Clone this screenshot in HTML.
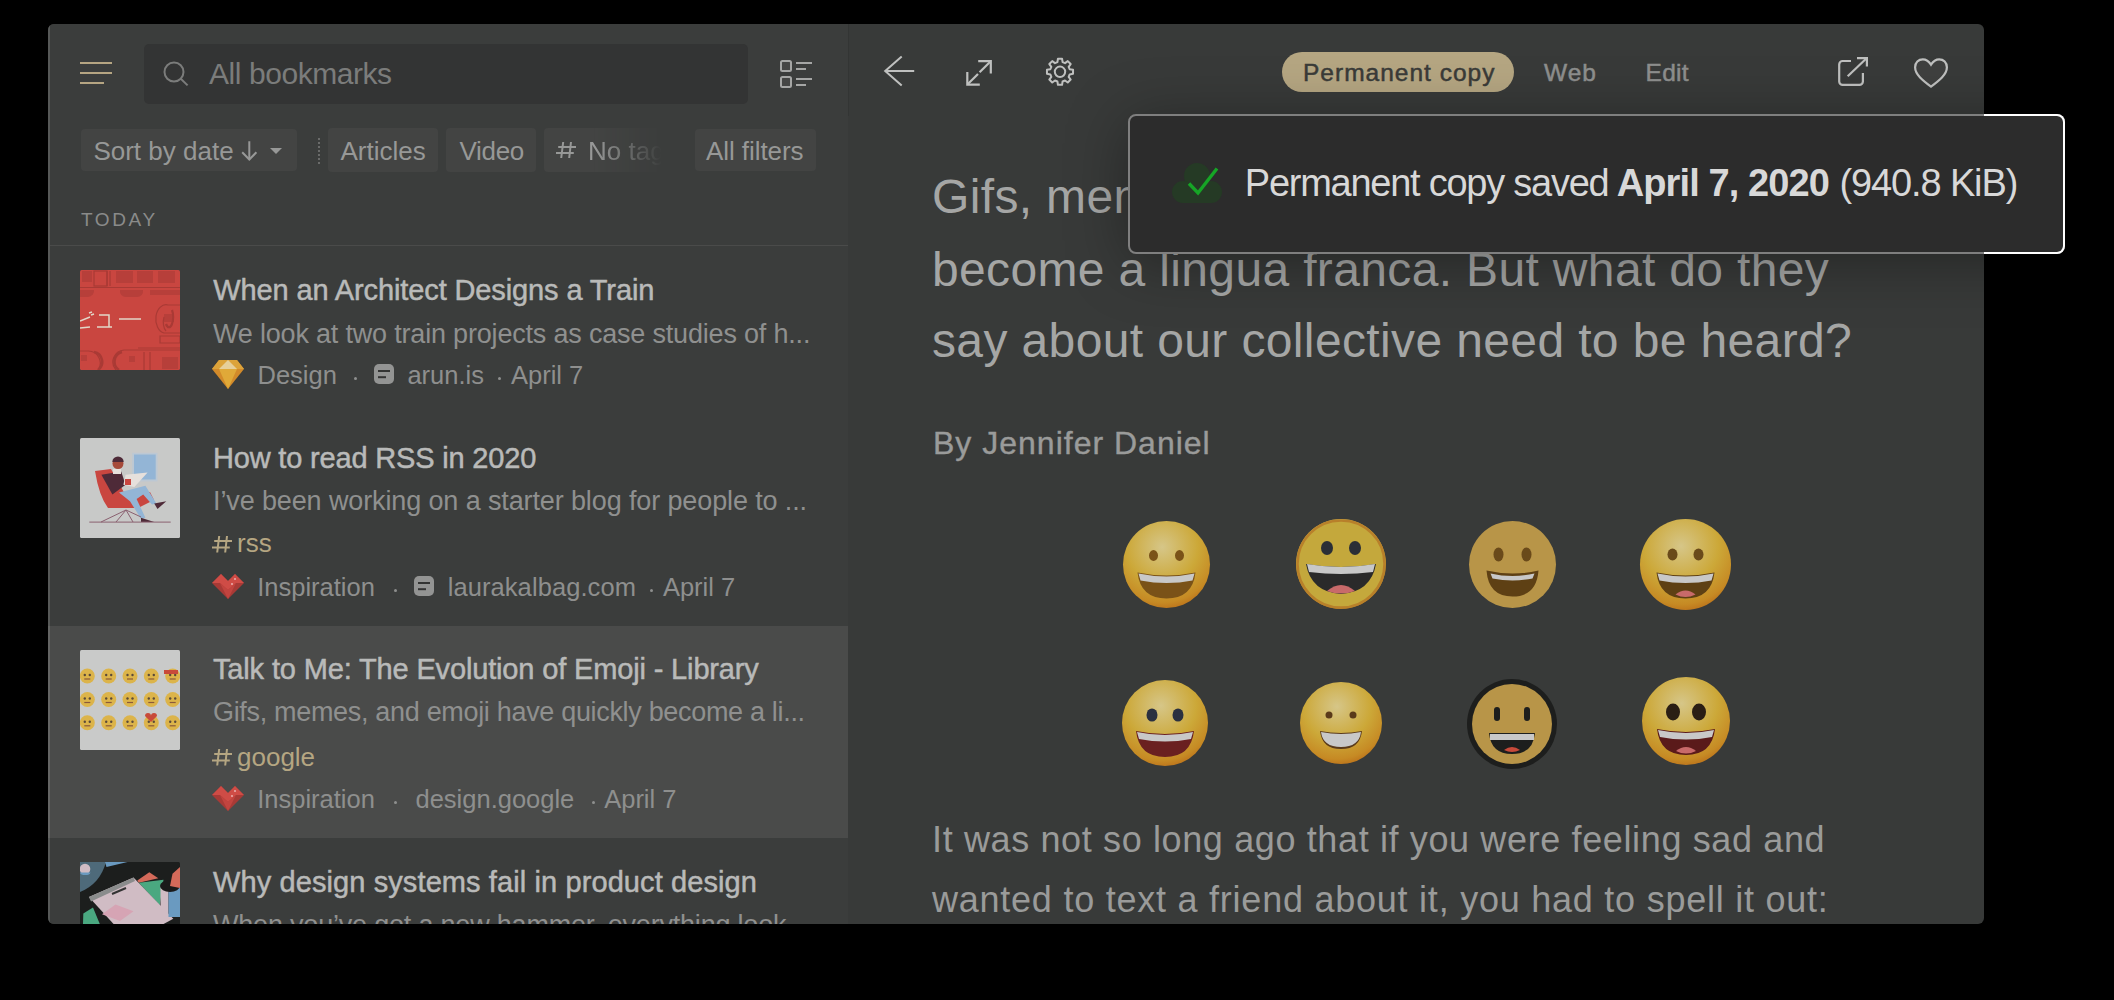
<!DOCTYPE html>
<html><head><meta charset="utf-8">
<style>
html,body{margin:0;padding:0;background:#000;width:2114px;height:1000px;overflow:hidden;font-family:"Liberation Sans",sans-serif;}
.t{position:absolute;white-space:nowrap;line-height:1;}
.abs{position:absolute;}
.clip{position:absolute;left:48px;top:24px;width:1936px;height:900px;overflow:hidden;border-radius:6px;}
.inner{position:absolute;left:-48px;top:-24px;width:2114px;height:1000px;}
</style></head>
<body>
<div class="clip"><div class="inner">
<div class="abs" style="left:48px;top:24px;width:1936px;height:900px;background:#383a39;"></div>
<div class="abs" style="left:48px;top:24px;width:800px;height:900px;background:#3b3d3c;"></div>
<div class="abs" style="left:48px;top:626px;width:800px;height:212px;background:#4a4b4a;"></div>
<div class="abs" style="left:48px;top:24px;width:2px;height:900px;background:rgba(255,255,255,0.14);"></div>
<div class="abs" style="left:848px;top:24px;width:1px;height:92px;background:#333534;"></div>
<div class="abs" style="left:50px;top:245px;width:798px;height:1px;background:#4a4b4a;"></div>
<div class="abs" style="left:80px;top:62px;width:32px;height:2px;background:#b5a582;"></div>
<div class="abs" style="left:80px;top:72px;width:32px;height:2px;background:#b5a582;"></div>
<div class="abs" style="left:80px;top:82px;width:24px;height:2px;background:#b5a582;"></div>
<div class="abs" style="left:144px;top:44px;width:604px;height:60px;background:#333434;border-radius:5px;"></div>
<svg class="abs" style="left:160px;top:58px" width="32" height="32" viewBox="0 0 32 32"><circle cx="14" cy="14" r="9.5" fill="none" stroke="#7b7c7b" stroke-width="2"/><line x1="20.8" y1="20.8" x2="27.6" y2="27.4" stroke="#7b7c7b" stroke-width="2"/></svg>
<div class="t" style="left:209.0px;top:58.9px;font-size:30px;color:#7b7c7b;letter-spacing:-0.44px;">All bookmarks</div>
<svg class="abs" style="left:776px;top:56px" width="40" height="36" viewBox="0 0 40 36"><rect x="5" y="5" width="10" height="10" rx="1.5" fill="#454645" stroke="#a5a6a5" stroke-width="2"/><rect x="5" y="21" width="10" height="10" rx="1.5" fill="#454645" stroke="#a5a6a5" stroke-width="2"/><rect x="20" y="6" width="16" height="2" fill="#a5a6a5"/><rect x="20" y="12" width="10" height="2" fill="#a5a6a5"/><rect x="20" y="22" width="16" height="2" fill="#a5a6a5"/><rect x="20" y="28" width="10" height="2" fill="#a5a6a5"/></svg>
<div class="abs" style="left:81px;top:129px;width:216px;height:42px;background:#434443;border-radius:4px;"></div>
<div class="t" style="left:93.4px;top:137.9px;font-size:26px;color:#979897;">Sort by date</div>
<svg class="abs" style="left:240px;top:140px" width="20" height="22" viewBox="0 0 20 22" fill="none" stroke="#979897" stroke-width="2"><path d="M9.3 1.2 V19.5"/><path d="M2.2 12.3 L9.3 19.5 L16.4 12.3"/></svg>
<svg class="abs" style="left:268px;top:146px" width="16" height="10" viewBox="0 0 16 10"><path d="M2 2 L14 2 L8 8 Z" fill="#979897"/></svg>
<div class="abs" style="left:318px;top:138px;width:2px;height:26px;background:repeating-linear-gradient(#6a6b6a 0 2px,transparent 2px 4px);"></div>
<div class="abs" style="left:328px;top:128px;width:110px;height:44px;background:#434443;border-radius:4px;"></div>
<div class="t" style="left:340.5px;top:137.9px;font-size:26px;color:#979897;">Articles</div>
<div class="abs" style="left:446px;top:128px;width:90px;height:44px;background:#434443;border-radius:4px;"></div>
<div class="t" style="left:459.4px;top:137.9px;font-size:26px;color:#979897;letter-spacing:-0.29px;">Video</div>
<div class="abs" style="left:544px;top:128px;width:140px;height:44px;overflow:hidden;-webkit-mask-image:linear-gradient(90deg,#000 0,#000 50px,rgba(0,0,0,0.55) 82px,transparent 118px);"><div class="abs" style="left:0;top:0;width:140px;height:44px;background:#434443;border-radius:4px;"></div><div class="t" style="left:44px;top:9.8px;font-size:26px;color:#979897;">No tag</div></div>
<svg class="abs" style="left:556px;top:142px" width="20" height="16" viewBox="0 0 20 16" fill="none" stroke="#979897" stroke-width="2"><path d="M2.20 4.96 H20.00 M0 11.04 H17.80 M7.20 0 L5.20 16.00 M15.00 0 L13.20 16.00"/></svg>
<div class="abs" style="left:695px;top:129px;width:121px;height:42px;background:#434443;border-radius:4px;"></div>
<div class="t" style="left:706.0px;top:137.9px;font-size:26px;color:#979897;letter-spacing:-0.07px;">All filters</div>
<div class="t" style="left:81.0px;top:209.9px;font-size:19px;color:#8a8b8a;letter-spacing:2.6px;">TODAY</div>
<svg class="abs" style="left:80px;top:270px" width="100" height="100" viewBox="0 0 100 100"><rect width="100" height="100" rx="1.5" fill="#c94640"/><g fill="#b73f3a"><rect x="2" y="1" width="10" height="11"/><rect x="36" y="1" width="17" height="12"/><rect x="57" y="1" width="16" height="12"/><rect x="78" y="1" width="17" height="12"/><path d="M0 20 h14 a7 6 0 0 1 -6 7 h-8z"/><path d="M40 20 h23 a6 6 0 0 1 -6 7 h-11 a6 6 0 0 1 -6 -7z"/><rect x="70" y="20" width="30" height="5"/><rect x="84" y="44" width="10" height="8"/><rect x="1" y="85" width="6" height="6"/><rect x="49" y="86" width="6" height="6"/><rect x="82" y="87" width="16" height="12"/></g><g fill="none" stroke="#a93a35" stroke-width="1.2"><rect x="14" y="1" width="13" height="15"/><path d="M27 1 v15 M30 1 v15"/><path d="M0 17.5 H100"/><path d="M100 35 H88 a10 14 0 0 0 -4 28 H100"/><path d="M84 47 a5 10 0 0 0 2 14"/><path d="M80 66 h20 v7 h-20z"/><path d="M0 81 H8 a12 12 0 0 1 10 19"/><path d="M14 82 a10 10 0 0 1 4 18" stroke-width="2.5"/><path d="M100 80 H44 a12 12 0 0 0 -8 20"/><path d="M42 82 a10 10 0 0 0 -3 18" stroke-width="2.5"/><path d="M64 82 v18 M70 82 v18"/><path d="M58 78 h42"/><path d="M92 40 a4 10 0 0 1 -6 14" stroke-width="2.2"/></g><g stroke="#e2d7c8" stroke-width="1.5" fill="none"><path d="M0 51 L10 47 M9 43 L12 42 M11 45 L14 44 M0 58 L10 57"/><path d="M19 45 h10 v12 M17 57 h15"/><path d="M39 49 h22"/></g></svg>
<div class="t" style="left:213.3px;top:275.6px;font-size:29px;color:#b9bab9;letter-spacing:-0.12px;-webkit-text-stroke:0.5px #b9bab9;">When an Architect Designs a Train</div>
<div class="t" style="left:213.0px;top:320.5px;font-size:27px;color:#8f908f;letter-spacing:-0.19px;">We look at two train projects as case studies of h...</div>
<svg class="abs" style="left:212px;top:359px" width="32" height="30" viewBox="0 0 32 30"><path d="M7 1 L25 1 L32 10 L16 30 L0 10 Z" fill="#d28a2a"/><path d="M7 1 L25 1 L32 10 L0 10 Z" fill="#dca33a"/><path d="M16 1 L25 10 L7 10 Z" fill="#e6cf9a"/><path d="M7 10 L25 10 L16 30 Z" fill="#e0a938"/></svg>
<div class="t" style="left:257.5px;top:363.2px;font-size:25.5px;color:#8e8f8e;">Design</div>
<div class="abs" style="left:354.0px;top:376.8px;width:3px;height:3px;background:#8e8f8e;border-radius:50%;"></div>
<svg class="abs" style="left:374px;top:364px" width="20" height="20" viewBox="0 0 20 20"><rect x="0" y="0" width="20" height="20" rx="5" fill="#939493"/><rect x="4" y="6" width="12" height="2" fill="#333433"/><rect x="4" y="12.2" width="8" height="2" fill="#333433"/></svg>
<div class="t" style="left:407.4px;top:363.2px;font-size:25.5px;color:#8e8f8e;">arun.is</div>
<div class="abs" style="left:498.2px;top:376.8px;width:3px;height:3px;background:#8e8f8e;border-radius:50%;"></div>
<div class="t" style="left:511.0px;top:363.2px;font-size:25.5px;color:#8e8f8e;">April 7</div>
<svg class="abs" style="left:80px;top:438px" width="100" height="100" viewBox="0 0 100 100"><rect width="100" height="100" rx="1.5" fill="#c8c9c8"/><rect x="52.2" y="14.8" width="25.3" height="28.6" fill="#bcc8d4"/><rect x="54" y="16.5" width="21.7" height="25" fill="#93b5d6"/><path d="M15 33 L31 31 L46 58 L70 54 L74 62 L58 70 L28 70 Q19 58 15 33 Z" fill="#c94640"/><path d="M21.4 36.8 L41.2 33.5 L45.6 46.7 L32.4 56.6 Z" fill="#4e2a38"/><path d="M39 54.4 L65.4 47.8 L76.4 65.4 L72 66.5 L63.2 56.6 L56.6 61 L65.4 79.7 L61 80.8 L50 63.2 Z" fill="#93b5d6"/><circle cx="38" cy="25.5" r="5.5" fill="#a64a3a"/><path d="M32.3 24 a5.7 5.5 0 0 1 11.4 0 z" fill="#4e2a38"/><path d="M33 31 h8 v5 h-8z" fill="#e6e0dc"/><path d="M45.6 36.8 L67.6 34.6 L54.4 48.9 L43.4 46.7 Z" fill="#e6e0dc"/><rect x="45" y="41" width="6" height="6" fill="#c94640"/><path d="M74.2 65.4 L86.3 63.2 L77.5 70.9 Z" fill="#4e2a38"/><path d="M61 79.7 L74.2 84 L61 84 Z" fill="#4e2a38"/><g stroke="#8a6070" stroke-width="1"><line x1="9.3" y1="84.1" x2="90.7" y2="84.1"/><line x1="46" y1="72" x2="21" y2="84"/><line x1="46" y1="72" x2="36" y2="84"/><line x1="46" y1="72" x2="53" y2="84"/><line x1="46" y1="72" x2="61" y2="79"/></g></svg>
<div class="t" style="left:213.0px;top:443.7px;font-size:29px;color:#b9bab9;letter-spacing:-0.18px;-webkit-text-stroke:0.5px #b9bab9;">How to read RSS in 2020</div>
<div class="t" style="left:213.0px;top:488.0px;font-size:27px;color:#8f908f;letter-spacing:-0.12px;">I’ve been working on a starter blog for people to ...</div>
<svg class="abs" style="left:212px;top:536px" width="20" height="16.5" viewBox="0 0 20 16.5" fill="none" stroke="#b5a682" stroke-width="2"><path d="M2.20 5.12 H20.00 M0 11.38 H17.80 M7.20 0 L5.20 16.50 M15.00 0 L13.20 16.50"/></svg>
<div class="t" style="left:237.0px;top:530.4px;font-size:26px;color:#b5a682;">rss</div>
<svg class="abs" style="left:212px;top:573px" width="32" height="26" viewBox="0 0 32 26"><path d="M0 10 L9 1 L16 8 L23 1 L32 10 L16 26 Z" fill="#a83a36"/><path d="M0 10 L9 1 L16 8 L23 1 L32 10 L24 10 L16 17 L8 10 Z" fill="#cf4c46"/><path d="M8 10 L16 17 L24 10 L16 26 Z" fill="#c2443f"/><circle cx="23" cy="6" r="1" fill="#e8b0b0"/><circle cx="20" cy="11" r="1" fill="#e8b0b0"/></svg>
<div class="t" style="left:257.2px;top:574.9px;font-size:25.5px;color:#8e8f8e;">Inspiration</div>
<div class="abs" style="left:393.9px;top:588.5px;width:3px;height:3px;background:#8e8f8e;border-radius:50%;"></div>
<svg class="abs" style="left:414px;top:576px" width="20" height="20" viewBox="0 0 20 20"><rect x="0" y="0" width="20" height="20" rx="5" fill="#939493"/><rect x="4" y="6" width="12" height="2" fill="#333433"/><rect x="4" y="12.2" width="8" height="2" fill="#333433"/></svg>
<div class="t" style="left:447.7px;top:574.9px;font-size:25.5px;color:#8e8f8e;letter-spacing:0.08px;">laurakalbag.com</div>
<div class="abs" style="left:650.3px;top:588.5px;width:3px;height:3px;background:#8e8f8e;border-radius:50%;"></div>
<div class="t" style="left:662.9px;top:574.9px;font-size:25.5px;color:#8e8f8e;">April 7</div>
<svg class="abs" style="left:80px;top:650px" width="100" height="100" viewBox="0 0 100 100"><rect width="100" height="100" rx="1.5" fill="#c9cac9"/><circle cx="7.3" cy="26" r="7.5" fill="#dcb44a"/><circle cx="4.8" cy="25" r="1.2" fill="#5a4a3a"/><circle cx="9.8" cy="25" r="1.2" fill="#5a4a3a"/><path d="M4.3 29 h6" stroke="#8a5a3a" stroke-width="1.2"/><circle cx="28.7" cy="26" r="7.5" fill="#dcb44a"/><circle cx="26.2" cy="25" r="1.2" fill="#5a4a3a"/><circle cx="31.2" cy="25" r="1.2" fill="#5a4a3a"/><path d="M25.7 29 h6" stroke="#8a5a3a" stroke-width="1.2"/><circle cx="50" cy="26" r="7.5" fill="#dcb44a"/><circle cx="47.5" cy="25" r="1.2" fill="#5a4a3a"/><circle cx="52.5" cy="25" r="1.2" fill="#5a4a3a"/><path d="M47 29 h6" stroke="#8a5a3a" stroke-width="1.2"/><circle cx="71.3" cy="26" r="7.5" fill="#dcb44a"/><circle cx="68.8" cy="25" r="1.2" fill="#5a4a3a"/><circle cx="73.8" cy="25" r="1.2" fill="#5a4a3a"/><path d="M68.3 29 h6" stroke="#8a5a3a" stroke-width="1.2"/><circle cx="92.7" cy="26" r="7.5" fill="#dcb44a"/><circle cx="90.2" cy="25" r="1.2" fill="#5a4a3a"/><circle cx="95.2" cy="25" r="1.2" fill="#5a4a3a"/><path d="M89.7 29 h6" stroke="#8a5a3a" stroke-width="1.2"/><circle cx="7.3" cy="49.5" r="7.5" fill="#dcb44a"/><circle cx="4.8" cy="48.5" r="1.2" fill="#5a4a3a"/><circle cx="9.8" cy="48.5" r="1.2" fill="#5a4a3a"/><path d="M4.3 52.5 h6" stroke="#8a5a3a" stroke-width="1.2"/><circle cx="28.7" cy="49.5" r="7.5" fill="#dcb44a"/><circle cx="26.2" cy="48.5" r="1.2" fill="#5a4a3a"/><circle cx="31.2" cy="48.5" r="1.2" fill="#5a4a3a"/><path d="M25.7 52.5 h6" stroke="#8a5a3a" stroke-width="1.2"/><circle cx="50" cy="49.5" r="7.5" fill="#dcb44a"/><circle cx="47.5" cy="48.5" r="1.2" fill="#5a4a3a"/><circle cx="52.5" cy="48.5" r="1.2" fill="#5a4a3a"/><path d="M47 52.5 h6" stroke="#8a5a3a" stroke-width="1.2"/><circle cx="71.3" cy="49.5" r="7.5" fill="#dcb44a"/><circle cx="68.8" cy="48.5" r="1.2" fill="#5a4a3a"/><circle cx="73.8" cy="48.5" r="1.2" fill="#5a4a3a"/><path d="M68.3 52.5 h6" stroke="#8a5a3a" stroke-width="1.2"/><circle cx="92.7" cy="49.5" r="7.5" fill="#dcb44a"/><circle cx="90.2" cy="48.5" r="1.2" fill="#5a4a3a"/><circle cx="95.2" cy="48.5" r="1.2" fill="#5a4a3a"/><path d="M89.7 52.5 h6" stroke="#8a5a3a" stroke-width="1.2"/><circle cx="7.3" cy="72.8" r="7.5" fill="#dcb44a"/><circle cx="4.8" cy="71.8" r="1.2" fill="#5a4a3a"/><circle cx="9.8" cy="71.8" r="1.2" fill="#5a4a3a"/><path d="M4.3 75.8 h6" stroke="#8a5a3a" stroke-width="1.2"/><circle cx="28.7" cy="72.8" r="7.5" fill="#dcb44a"/><circle cx="26.2" cy="71.8" r="1.2" fill="#5a4a3a"/><circle cx="31.2" cy="71.8" r="1.2" fill="#5a4a3a"/><path d="M25.7 75.8 h6" stroke="#8a5a3a" stroke-width="1.2"/><circle cx="50" cy="72.8" r="7.5" fill="#dcb44a"/><circle cx="47.5" cy="71.8" r="1.2" fill="#5a4a3a"/><circle cx="52.5" cy="71.8" r="1.2" fill="#5a4a3a"/><path d="M47 75.8 h6" stroke="#8a5a3a" stroke-width="1.2"/><circle cx="71.3" cy="72.8" r="7.5" fill="#dcb44a"/><circle cx="68.8" cy="71.8" r="1.2" fill="#5a4a3a"/><circle cx="73.8" cy="71.8" r="1.2" fill="#5a4a3a"/><path d="M68.3 75.8 h6" stroke="#8a5a3a" stroke-width="1.2"/><circle cx="92.7" cy="72.8" r="7.5" fill="#dcb44a"/><circle cx="90.2" cy="71.8" r="1.2" fill="#5a4a3a"/><circle cx="95.2" cy="71.8" r="1.2" fill="#5a4a3a"/><path d="M89.7 75.8 h6" stroke="#8a5a3a" stroke-width="1.2"/><path d="M84 20 h14 v4 h-14z" fill="#c84a3a"/><path d="M65 66 a3 3 0 0 1 6 0 a3 3 0 0 1 6 0 l-6 6z" fill="#c84a3a"/></svg>
<div class="t" style="left:213.0px;top:655.0px;font-size:29px;color:#b9bab9;letter-spacing:-0.15px;-webkit-text-stroke:0.5px #b9bab9;">Talk to Me: The Evolution of Emoji - Library</div>
<div class="t" style="left:213.0px;top:699.3px;font-size:27px;color:#8f908f;letter-spacing:-0.32px;">Gifs, memes, and emoji have quickly become a li...</div>
<svg class="abs" style="left:212px;top:749px" width="20" height="16.5" viewBox="0 0 20 16.5" fill="none" stroke="#b5a682" stroke-width="2"><path d="M2.20 5.12 H20.00 M0 11.38 H17.80 M7.20 0 L5.20 16.50 M15.00 0 L13.20 16.50"/></svg>
<div class="t" style="left:237.0px;top:743.5px;font-size:26px;color:#b5a682;">google</div>
<svg class="abs" style="left:212px;top:785px" width="32" height="26" viewBox="0 0 32 26"><path d="M0 10 L9 1 L16 8 L23 1 L32 10 L16 26 Z" fill="#a83a36"/><path d="M0 10 L9 1 L16 8 L23 1 L32 10 L24 10 L16 17 L8 10 Z" fill="#cf4c46"/><path d="M8 10 L16 17 L24 10 L16 26 Z" fill="#c2443f"/><circle cx="23" cy="6" r="1" fill="#e8b0b0"/><circle cx="20" cy="11" r="1" fill="#e8b0b0"/></svg>
<div class="t" style="left:257.2px;top:787.1px;font-size:25.5px;color:#8e8f8e;">Inspiration</div>
<div class="abs" style="left:393.9px;top:800.7px;width:3px;height:3px;background:#8e8f8e;border-radius:50%;"></div>
<div class="t" style="left:415.5px;top:787.1px;font-size:25.5px;color:#8e8f8e;">design.google</div>
<div class="abs" style="left:591.5px;top:800.7px;width:3px;height:3px;background:#8e8f8e;border-radius:50%;"></div>
<div class="t" style="left:604.2px;top:787.1px;font-size:25.5px;color:#8e8f8e;">April 7</div>
<svg class="abs" style="left:80px;top:862px" width="100" height="100" viewBox="0 0 100 100"><rect width="100" height="100" rx="1.5" fill="#1c1e1d"/><path d="M0 0 H26 Q20 22 0 30 Z" fill="#4e6a7a"/><path d="M25 0 H47.5 L26.5 5 Z" fill="#6a9ac0"/><circle cx="5" cy="7" r="5.3" fill="#d0bcc4"/><path d="M0 10.5 h10.5 a5.3 3 0 0 1 -10.5 0z" fill="#6a9ac0"/><path d="M3.3 51.5 L13 45.5 L19.8 62 L3 62 Z" fill="#4aa880"/><path d="M57.3 18.5 L69.3 10.3 L78.3 16.3 L58.8 20.8 Z" fill="#d46a5a"/><path d="M58.8 20.8 L83.5 17.8 L79.8 43.3 Z" fill="#4aa880"/><path d="M8.9 35 L53.5 15.5 L93.3 56.8 L50 80 Z" fill="#d0bcc4"/><path d="M8.9 35 L53.5 15.5 L55 19 L11 39.5 Z" fill="#8a8c8c"/><path d="M22 52.3 L35.5 42.5 L53.5 49.3 L40 59 Z" fill="#d6a4b4"/><path d="M32 32 l14 -6" stroke="#333" stroke-width="2"/><rect x="80.5" y="24" width="8" height="31" fill="#d0bcc4"/><rect x="88.5" y="24" width="11.5" height="31" fill="#6a9ac0"/><ellipse cx="90" cy="24" rx="10" ry="6" fill="#1a1a1a"/><path d="M92.5 11.8 L100 5 L100 26 L90 24 Z" fill="#d46a5a"/></svg>
<div class="t" style="left:213.0px;top:867.7px;font-size:29px;color:#b9bab9;letter-spacing:0.1px;-webkit-text-stroke:0.5px #b9bab9;">Why design systems fail in product design</div>
<div class="t" style="left:213.0px;top:912.0px;font-size:27px;color:#8f908f;letter-spacing:-0.2px;">When you’ve got a new hammer, everything look</div>
<svg class="abs" style="left:880px;top:52px" width="40" height="40" viewBox="0 0 40 40" fill="none" stroke="#bfc0bf" stroke-width="2"><path d="M34.2 19 H5.5"/><path d="M21.7 4.4 L5.2 19 L21.7 33.6"/></svg>
<svg class="abs" style="left:960px;top:52px" width="40" height="40" viewBox="0 0 40 40" fill="none" stroke="#bfc0bf" stroke-width="2.2"><path d="M18.2 9.1 H30.8 V21.6"/><path d="M7.3 20 V32.6 H19.8"/><path d="M30.2 9.7 L19.6 20.3"/><path d="M18 22 L7.9 32"/></svg>
<svg class="abs" style="left:1040px;top:52px" width="40" height="40" viewBox="0 0 40 40" fill="none" stroke="#bfc0bf" stroke-width="2"><path d="M17.41 10.14 L17.94 6.76 L22.06 6.76 L22.59 10.14 L25.00 11.14 L27.76 9.12 L30.68 12.04 L28.66 14.80 L29.66 17.21 L33.04 17.74 L33.04 21.86 L29.66 22.39 L28.66 24.80 L30.68 27.56 L27.76 30.48 L25.00 28.46 L22.59 29.46 L22.06 32.84 L17.94 32.84 L17.41 29.46 L15.00 28.46 L12.24 30.48 L9.32 27.56 L11.34 24.80 L10.34 22.39 L6.96 21.86 L6.96 17.74 L10.34 17.21 L11.34 14.80 L9.32 12.04 L12.24 9.12 L15.00 11.14 Z" stroke-linejoin="round"/><circle cx="20" cy="19.8" r="5.2"/></svg>
<div class="abs" style="left:1282px;top:52px;width:232px;height:40px;background:#b5a682;border-radius:20px;"></div>
<div class="t" style="left:1303.0px;top:60.9px;font-size:24.5px;color:#3a3b38;letter-spacing:1.0px;-webkit-text-stroke:0.5px #3a3b38;">Permanent copy</div>
<div class="t" style="left:1544.0px;top:60.9px;font-size:24.5px;color:#8e8f8e;letter-spacing:1.0px;-webkit-text-stroke:0.5px #8e8f8e;">Web</div>
<div class="t" style="left:1645.5px;top:60.9px;font-size:24.5px;color:#8e8f8e;letter-spacing:0.3px;-webkit-text-stroke:0.5px #8e8f8e;">Edit</div>
<svg class="abs" style="left:1832px;top:52px" width="40" height="40" viewBox="0 0 40 40" fill="none" stroke="#bfc0bf" stroke-width="2.2"><path d="M19 9 H10.7 a3.5 3.5 0 0 0 -3.5 3.5 V29.4 a3.5 3.5 0 0 0 3.5 3.5 H27.4 a3.5 3.5 0 0 0 3.5 -3.5 V21"/><path d="M15.7 24.2 L34.6 6.3"/><path d="M25 6.1 H34.9 V14.6"/></svg>
<svg class="abs" style="left:1911px;top:52px" width="40" height="40" viewBox="0 0 40 40" fill="none" stroke="#bfc0bf" stroke-width="2.2"><path d="M20 34.6 C12 28.6 4.1 22.6 4.1 15.2 C4.1 10.4 7.5 7.3 11.8 7.3 C15.2 7.3 18 9.4 20 12.6 C22 9.4 24.8 7.3 28.2 7.3 C32.5 7.3 35.9 10.4 35.9 15.2 C35.9 22.6 28 28.6 20 34.6 Z" fill="#3f403f"/></svg>
<div class="t" style="left:932.0px;top:173.3px;font-size:48px;color:#a5a6a5;letter-spacing:0.35px;">Gifs, memes, and emoji have quickly</div>
<div class="t" style="left:932.0px;top:245.9px;font-size:48px;color:#a5a6a5;letter-spacing:0.35px;">become a lingua franca. But what do they</div>
<div class="t" style="left:932.0px;top:317.4px;font-size:48px;color:#a5a6a5;letter-spacing:0.37px;">say about our collective need to be heard?</div>
<div class="t" style="left:933.0px;top:427.1px;font-size:32px;color:#9a9b9a;letter-spacing:1.0px;-webkit-text-stroke:0.4px #9a9b9a;">By Jennifer Daniel</div>
<div class="t" style="left:932.0px;top:821.5px;font-size:36px;color:#9a9b9a;letter-spacing:0.63px;">It was not so long ago that if you were feeling sad and</div>
<div class="t" style="left:932.0px;top:881.5px;font-size:36px;color:#9a9b9a;letter-spacing:0.76px;">wanted to text a friend about it, you had to spell it out:</div>
<svg class="abs" style="left:1119.0px;top:516.5px" width="95.0" height="95.0" viewBox="-47.5 -47.5 95.0 95.0"><defs><radialGradient id="g1" cx="0.45" cy="0.3" r="0.75"><stop offset="0" stop-color="#d6c688"/><stop offset="0.55" stop-color="#cca838"/><stop offset="0.85" stop-color="#c68a24"/><stop offset="1" stop-color="#b86a18"/></radialGradient></defs><circle r="43.5" fill="url(#g1)"/><ellipse cx="-13" cy="-9" rx="4.5" ry="5.4" fill="#7a5218"/><ellipse cx="13" cy="-9" rx="4.5" ry="5.4" fill="#7a5218"/><path d="M-29 8 Q0 14 29 8 Q26 34 0 34 Q-26 34 -29 8 Z" fill="#7a5218"/><path d="M-28 9 Q0 15 28 9 L26 16 Q0 21 -26 16 Z" fill="#c8c8c8"/></svg>
<svg class="abs" style="left:1292px;top:514.5px" width="98" height="98" viewBox="-49 -49 98 98"><defs><radialGradient id="g2" cx="0.45" cy="0.3" r="0.75"><stop offset="0" stop-color="#d6c688"/><stop offset="0.55" stop-color="#cca838"/><stop offset="0.85" stop-color="#c68a24"/><stop offset="1" stop-color="#b86a18"/></radialGradient></defs><circle r="45" fill="url(#g2)"/><circle r="43.5" fill="#c4a83c" stroke="#b8802a" stroke-width="2.5"/><ellipse cx="-14" cy="-16" rx="6" ry="7" fill="#2a2e36"/><ellipse cx="14" cy="-16" rx="6" ry="7" fill="#2a2e36"/><path d="M-35 0 Q0 6 35 0 Q30 28 0 30 Q-30 28 -35 0 Z" fill="#2a2a2a"/><path d="M-34 0 Q0 6 34 0 L32 8 Q0 12 -32 8 Z" fill="#c8c8c8"/><path d="M-14 27 q14 -12 28 0 q-14 5 -28 0z" fill="#c86a6a"/></svg>
<svg class="abs" style="left:1464.8px;top:516.5px" width="95.0" height="95.0" viewBox="-47.5 -47.5 95.0 95.0"><circle r="43.5" fill="#b89548"/><ellipse cx="-14" cy="-10" rx="5" ry="7" fill="#6a4a1a"/><ellipse cx="14" cy="-10" rx="5" ry="7" fill="#6a4a1a"/><path d="M-26 6 Q0 12 26 6 Q24 32 0 32 Q-24 32 -26 6 Z" fill="#5e4014"/><path d="M-22 9 Q0 14 22 9 L20 14 Q0 18 -20 14 Z" fill="#c8c8c8"/></svg>
<svg class="abs" style="left:1635.5px;top:514.5px" width="99.0" height="99.0" viewBox="-49.5 -49.5 99.0 99.0"><defs><radialGradient id="g4" cx="0.45" cy="0.3" r="0.75"><stop offset="0" stop-color="#d6c688"/><stop offset="0.55" stop-color="#cca838"/><stop offset="0.85" stop-color="#c68a24"/><stop offset="1" stop-color="#b86a18"/></radialGradient></defs><circle r="45.5" fill="url(#g4)"/><ellipse cx="-13" cy="-10" rx="5" ry="6.0" fill="#6a4a1a"/><ellipse cx="13" cy="-10" rx="5" ry="6.0" fill="#6a4a1a"/><path d="M-29 8 Q0 14 29 8 Q26 34 0 34 Q-26 34 -29 8 Z" fill="#5e4014"/><path d="M-28 9 Q0 15 28 9 L26 16 Q0 21 -26 16 Z" fill="#c8c8c8"/><path d="M-10 30 q10 -8 20 0 q-10 5 -20 0z" fill="#c86a6a"/></svg>
<svg class="abs" style="left:1118.4px;top:676px" width="94" height="94" viewBox="-47 -47 94 94"><defs><radialGradient id="g5" cx="0.45" cy="0.3" r="0.75"><stop offset="0" stop-color="#d6c688"/><stop offset="0.55" stop-color="#cca838"/><stop offset="0.85" stop-color="#c68a24"/><stop offset="1" stop-color="#b86a18"/></radialGradient></defs><circle r="43" fill="url(#g5)"/><ellipse cx="-13" cy="-8" rx="5.5" ry="6.6" fill="#2a3040"/><ellipse cx="13" cy="-8" rx="5.5" ry="6.6" fill="#2a3040"/><path d="M-29 8 Q0 14 29 8 Q26 34 0 34 Q-26 34 -29 8 Z" fill="#6a2020"/><path d="M-28 9 Q0 15 28 9 L26 16 Q0 21 -26 16 Z" fill="#c8c8c8"/></svg>
<svg class="abs" style="left:1295.7px;top:677.5px" width="90" height="90" viewBox="-45 -45 90 90"><defs><radialGradient id="g6" cx="0.45" cy="0.3" r="0.75"><stop offset="0" stop-color="#d6c688"/><stop offset="0.55" stop-color="#cca838"/><stop offset="0.85" stop-color="#c68a24"/><stop offset="1" stop-color="#b86a18"/></radialGradient></defs><circle r="41" fill="url(#g6)"/><circle cx="-12" cy="-8" r="3.5" fill="#5a3a1a"/><circle cx="12" cy="-8" r="3.5" fill="#5a3a1a"/><path d="M-21 8 Q0 12 21 8 Q19 26 0 26 Q-19 26 -21 8 Z" fill="#5a3a1a"/><path d="M-20 9 Q0 13 20 9 Q18 24 0 24 Q-18 24 -20 9 Z" fill="#c8c8c8"/></svg>
<svg class="abs" style="left:1463.4px;top:674.5px" width="98" height="98" viewBox="-49 -49 98 98"><circle r="45" fill="#1d1e1d"/><circle r="40" fill="#b89548"/><rect x="-18" y="-17" width="6" height="14" rx="3" fill="#1d1e1d"/><rect x="12" y="-17" width="6" height="14" rx="3" fill="#1d1e1d"/><path d="M-23 9 H23 Q21 30 0 30 Q-21 30 -23 9 Z" fill="#1d1e1d"/><rect x="-22" y="10" width="44" height="6" fill="#c8c8c8"/><path d="M-8 26 q8 -6 16 0 q-8 4 -16 0z" fill="#c84a3a"/></svg>
<svg class="abs" style="left:1637.5px;top:673.4px" width="96" height="96" viewBox="-48 -48 96 96"><defs><radialGradient id="g8" cx="0.45" cy="0.3" r="0.75"><stop offset="0" stop-color="#d6c688"/><stop offset="0.55" stop-color="#cca838"/><stop offset="0.85" stop-color="#c68a24"/><stop offset="1" stop-color="#b86a18"/></radialGradient></defs><circle r="44" fill="url(#g8)"/><ellipse cx="-13" cy="-9" rx="7" ry="8.4" fill="#2a1e14"/><ellipse cx="13" cy="-9" rx="7" ry="8.4" fill="#2a1e14"/><path d="M-29 8 Q0 14 29 8 Q26 34 0 34 Q-26 34 -29 8 Z" fill="#5a1a1a"/><path d="M-28 9 Q0 15 28 9 L26 16 Q0 21 -26 16 Z" fill="#c8c8c8"/><path d="M-10 30 q10 -8 20 0 q-10 5 -20 0z" fill="#c86a6a"/></svg>
</div></div>
<div class="abs" style="left:1128px;top:114px;width:937px;height:140px;box-sizing:border-box;border:2px solid #7f7f7f;border-radius:8px;background:#2c2c2c;box-shadow:0 8px 60px rgba(0,0,0,0.35);"></div><div class="abs" style="left:1984px;top:114px;width:81px;height:140px;box-sizing:border-box;border:2px solid #ffffff;border-left:none;border-radius:0 8px 8px 0;"></div><svg class="abs" style="left:1170px;top:160px" width="54" height="46" viewBox="0 0 54 46"><g fill="#253a25"><circle cx="27" cy="16" r="13"/><circle cx="13" cy="32" r="11"/><circle cx="41" cy="32" r="11"/><rect x="13" y="24" width="28" height="19"/></g><path d="M19 23.5 L28 33 L47 8.5" fill="none" stroke="#16a526" stroke-width="3.4"/></svg><div class="t" style="left:1244.8px;top:163.8px;font-size:38px;color:#d8d8d8;letter-spacing:-1.25px;">Permanent copy saved</div><div class="t" style="left:1616.7px;top:163.8px;font-size:38px;color:#d8d8d8;letter-spacing:-0.89px;font-weight:bold;">April 7, 2020</div><div class="t" style="left:1839.5px;top:163.8px;font-size:38px;color:#d8d8d8;letter-spacing:-1.13px;">(940.8 KiB)</div>
</body></html>
